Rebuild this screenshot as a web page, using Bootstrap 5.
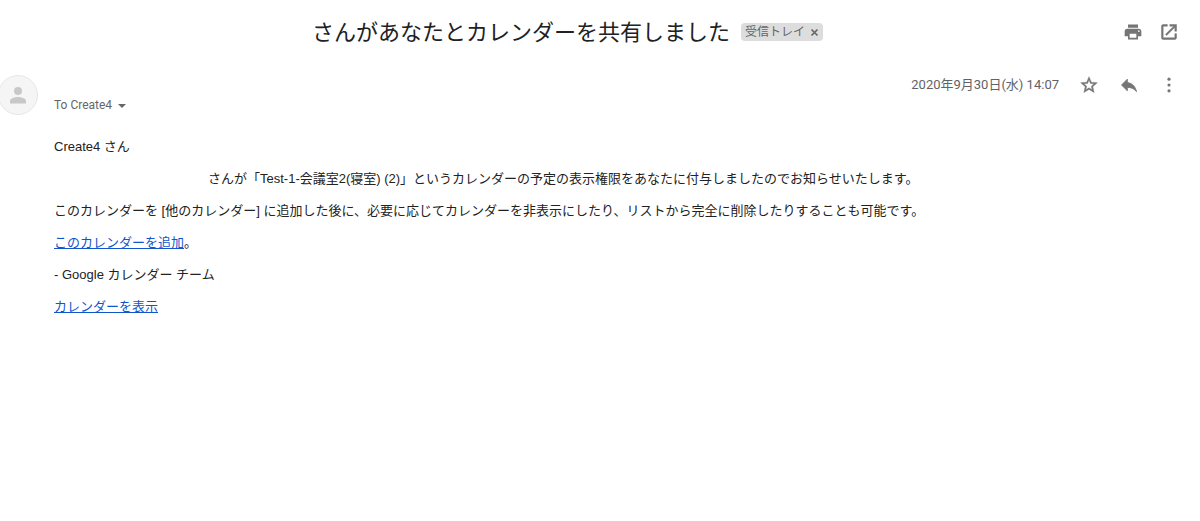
<!DOCTYPE html>
<html lang="ja">
<head>
<meta charset="utf-8">
<meta name="viewport" content="width=device-width, initial-scale=1">
<title>さんがあなたとカレンダーを共有しました</title>
<link href="https://cdn.jsdelivr.net/npm/bootstrap@5.3.0/dist/css/bootstrap.min.css" rel="stylesheet">
<style>
  body { background: #fff; color: #222; font: 13px/20px "Liberation Sans", "Noto Sans CJK JP", sans-serif; }
  .subject { padding: 16px 21px 0 312px; }
  .subject h1 { font: 400 22px/28px "Noto Sans CJK JP", sans-serif; color: #202124; padding-bottom: 4px; }
  .inbox-tag { height: 18px; margin-left: 11px; padding: 0 4px; border-radius: 4px; background: #ddd; color: #666; font-size: 12px; line-height: 18px; gap: 5px; }
  .plain { border: 0; padding: 0; background: none; color: inherit; line-height: inherit; display: inline-flex; align-items: center; }
  .plain svg { display: block; fill: currentColor; }
  .tools { color: #757575; gap: 16px; }
  .sender { padding: 27px 21px 0 0; color: #666; font-family: Roboto, "Noto Sans CJK JP", sans-serif; }
  .avatar { width: 40px; height: 40px; margin-left: -2px; border: 1px solid #e6e6e6; background: #f5f5f5; }
  .recipient { margin: 20px 0 0 16px; gap: 6px; font-size: 12px; }
  .recipient svg { margin-top: 1px; }
  .actions { gap: 20px; color: #757575; }
  .stamp { color: #5f6368; font-size: 13px; }
  .message { padding: 22px 22px 22px 54px; }
  .message p { margin-bottom: 12px; }
  .message a { color: #15c; }
  .unnamed { padding-left: 154px; }
</style>
</head>
<body>
<header class="subject d-flex align-items-center">
  <h1 class="mb-0">さんがあなたとカレンダーを共有しました</h1>
  <span class="inbox-tag d-inline-flex align-items-center">受信トレイ
    <button class="plain" type="button" aria-label="ラベルを削除"><svg width="9" height="9" viewBox="0 0 9 9"><path d="M1.500 1.500l6 6m0-6l-6 6" stroke="currentColor" stroke-width="1.700"/></svg></button>
  </span>
  <div class="tools d-flex ms-auto">
    <button class="plain" type="button" aria-label="印刷"><svg width="20" height="20" viewBox="0 0 24 24"><path d="M19 8H5c-1.660 0-3 1.340-3 3v6h4v4h12v-4h4v-6c0-1.660-1.340-3-3-3zm-3 11H8v-5h8v5zm3-7c-.55 0-1-.45-1-1s.45-1 1-1 1 .45 1 1-.45 1-1 1zM18 3H6v4h12V3z"/></svg></button>
    <button class="plain" type="button" aria-label="新しいウィンドウで開く"><svg width="20" height="20" viewBox="0 0 24 24"><path d="M19 19H5V5h5V3H5a2 2 0 0 0-2 2v14a2 2 0 0 0 2 2h14a2 2 0 0 0 2-2v-5h-2v5zM13 3v2h4.590l-9.800 9.800 1.410 1.410L19 6.410V11h2V3h-8z" stroke="currentColor" stroke-width=".6"/></svg></button>
  </div>
</header>
<main>
  <section class="sender d-flex align-items-start">
    <div class="avatar rounded-circle flex-shrink-0 d-flex align-items-center justify-content-center">
      <svg width="24" height="24" viewBox="0 0 24 24" fill="#c8c8c8" aria-hidden="true"><circle cx="12" cy="8" r="4"/><path d="M12 14c-2.670 0-8 1.340-8 4v2.500h16V18c0-2.660-5.330-4-8-4z"/></svg>
    </div>
    <button class="plain recipient" type="button">To Create4 <svg width="8" height="4" viewBox="0 0 8 4"><path d="M0 0h8L4 4z"/></svg></button>
    <div class="actions d-flex align-items-center ms-auto">
      <time class="stamp" datetime="2020-09-30T14:07">2020年9月30日(水) 14:07</time>
      <button class="plain" type="button" aria-label="スター"><svg width="20" height="20" viewBox="0 0 24 24"><path d="M22 9.240l-7.190-.62L12 2 9.190 8.630 2 9.240l5.460 4.730L5.820 21 12 17.270 18.180 21l-1.630-7.030L22 9.240zM12 15.400l-3.760 2.270 1-4.280-3.320-2.880 4.380-.38L12 6.100l1.710 4.040 4.380.38-3.320 2.880 1 4.280L12 15.400z" stroke="currentColor" stroke-width=".5"/></svg></button>
      <button class="plain" type="button" aria-label="返信"><svg width="20" height="20" viewBox="0 0 24 24"><path d="M10 9V5l-7 7 7 7v-4.100c5 0 8.500 1.600 11 5.100-1-5-4-10-11-11z" stroke="currentColor"/></svg></button>
      <button class="plain" type="button" aria-label="その他"><svg width="20" height="20" viewBox="0 0 24 24"><circle cx="12" cy="5" r="1.900"/><circle cx="12" cy="12" r="1.900"/><circle cx="12" cy="19" r="1.900"/></svg></button>
    </div>
  </section>
  <article class="message">
    <p>Create4 さん</p>
    <p class="unnamed">さんが「Test-1-会議室2(寝室) (2)」というカレンダーの予定の表示権限をあなたに付与しましたのでお知らせいたします。</p>
    <p>このカレンダーを [他のカレンダー] に追加した後に、必要に応じてカレンダーを非表示にしたり、リストから完全に削除したりすることも可能です。</p>
    <p><a href="#">このカレンダーを追加</a>。</p>
    <p>- Google カレンダー チーム</p>
    <p><a href="#">カレンダーを表示</a></p>
  </article>
</main>
<script src="https://cdn.jsdelivr.net/npm/bootstrap@5.3.0/dist/js/bootstrap.bundle.min.js"></script>
</body>
</html>
